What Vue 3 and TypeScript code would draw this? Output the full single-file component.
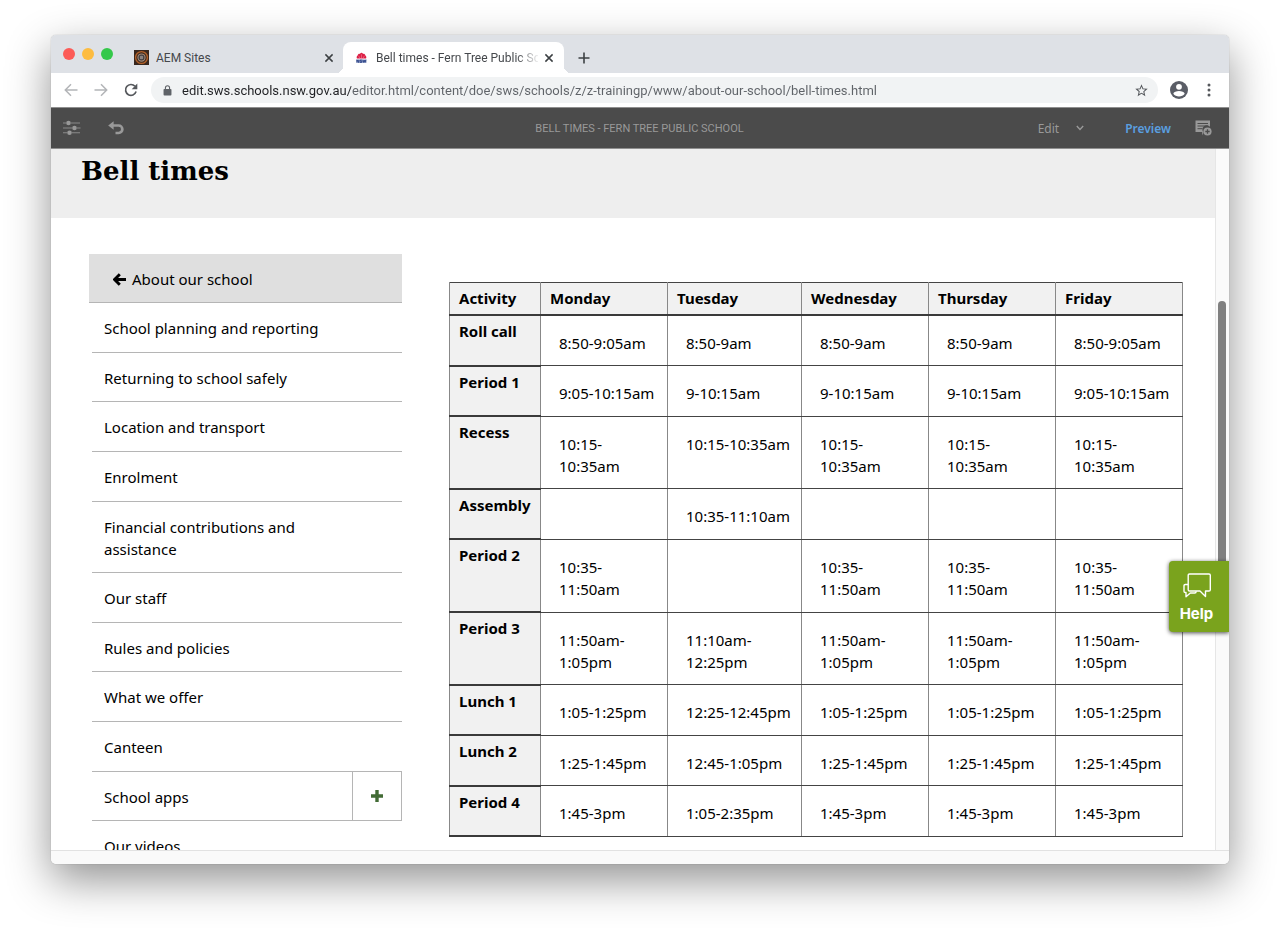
<script setup lang="ts">
import { ref } from 'vue'

interface NavItem {
  label: string
  expandable?: boolean
}

interface BellRow {
  activity: string
  times: string[]
}

const address = ref(
  'edit.sws.schools.nsw.gov.au/editor.html/content/doe/sws/schools/z/z-trainingp/www/about-our-school/bell-times.html',
)

const navItems: NavItem[] = [
  { label: 'School planning and reporting' },
  { label: 'Returning to school safely' },
  { label: 'Location and transport' },
  { label: 'Enrolment' },
  { label: 'Financial contributions and assistance' },
  { label: 'Our staff' },
  { label: 'Rules and policies' },
  { label: 'What we offer' },
  { label: 'Canteen' },
  { label: 'School apps', expandable: true },
  { label: 'Our videos' },
]

const days: string[] = ['Monday', 'Tuesday', 'Wednesday', 'Thursday', 'Friday']

const rows: BellRow[] = [
  { activity: 'Roll call', times: ['8:50-9:05am', '8:50-9am', '8:50-9am', '8:50-9am', '8:50-9:05am'] },
  { activity: 'Period 1', times: ['9:05-10:15am', '9-10:15am', '9-10:15am', '9-10:15am', '9:05-10:15am'] },
  { activity: 'Recess', times: ['10:15-10:35am', '10:15-10:35am', '10:15-10:35am', '10:15-10:35am', '10:15-10:35am'] },
  { activity: 'Assembly', times: ['', '10:35-11:10am', '', '', ''] },
  { activity: 'Period 2', times: ['10:35-11:50am', '', '10:35-11:50am', '10:35-11:50am', '10:35-11:50am'] },
  { activity: 'Period 3', times: ['11:50am-1:05pm', '11:10am-12:25pm', '11:50am-1:05pm', '11:50am-1:05pm', '11:50am-1:05pm'] },
  { activity: 'Lunch 1', times: ['1:05-1:25pm', '12:25-12:45pm', '1:05-1:25pm', '1:05-1:25pm', '1:05-1:25pm'] },
  { activity: 'Lunch 2', times: ['1:25-1:45pm', '12:45-1:05pm', '1:25-1:45pm', '1:25-1:45pm', '1:25-1:45pm'] },
  { activity: 'Period 4', times: ['1:45-3pm', '1:05-2:35pm', '1:45-3pm', '1:45-3pm', '1:45-3pm'] },
]
</script>

<template>
  <div class="desktop">
    <div class="window">
      <div class="tabs">
        <div class="lights">
          <button class="light red" aria-label="Close window"></button>
          <button class="light amber" aria-label="Minimise window"></button>
          <button class="light green" aria-label="Zoom window"></button>
        </div>
        <div class="tab">
          <svg class="fav" viewBox="0 0 16 16" width="15" height="15">
            <rect width="16" height="16" fill="#38271e" />
            <circle cx="8" cy="8" r="6.3" fill="none" stroke="#b4622a" stroke-width="1.5" />
            <circle cx="8" cy="8" r="3.8" fill="#3c3a3c" stroke="#a58a78" stroke-width="1.2" />
            <rect x="6.2" y="6.2" width="3.6" height="3.6" rx="1" fill="#8a8280" />
          </svg>
          <span class="tab-title">AEM Sites</span>
          <button class="tab-close" aria-label="Close AEM Sites">
            <svg viewBox="0 0 10 10" width="10" height="10"><path d="M1.4 1.4l7.2 7.2M8.6 1.4L1.4 8.6" stroke="#3c4043" stroke-width="1.5" fill="none" /></svg>
          </button>
        </div>
        <div class="tab active">
          <svg class="fav small" viewBox="0 0 12 12" width="11" height="12">
            <path d="M1 6.600C.4 5 .8 3.800 1.800 3.200 2 1.800 3.200 1.300 4.200 1.500 4.800.6 5.400.3 6 .3s1.200.3 1.800 1.200c1-.2 2.200.3 2.400 1.700 1 .6 1.400 1.800.8 3.400z" fill="#dc1f45" />
            <path d="M6 6.400V2M4.400 6.400L2.800 3.600M7.600 6.400l1.600-2.800" stroke="#f3a0b2" stroke-width=".5" />
            <path d="M.5 7.600h11v3.600H.5z" fill="#8d9bc4" />
            <path d="M1 11V8l2 3V8M6.300 8.200H4.600v1.200h1.700v1.400H4.400M7.500 8l.8 2.800.8-2.300.8 2.300.8-2.800" stroke="#2c4488" stroke-width="1" fill="none" />
          </svg>
          <span class="tab-title fade">Bell times - Fern Tree Public School</span>
          <button class="tab-close" aria-label="Close Bell times">
            <svg viewBox="0 0 10 10" width="10" height="10"><path d="M1.400 1.400l7.200 7.200M8.600 1.400L1.400 8.600" stroke="#3c4043" stroke-width="1.500" fill="none" /></svg>
          </button>
        </div>
        <button class="new-tab" aria-label="New tab">
          <svg viewBox="0 0 12 12" width="12" height="12"><path d="M6 .5v11M.5 6h11" stroke="#3c4043" stroke-width="1.600" /></svg>
        </button>
      </div>

      <div class="toolbar">
        <button class="tool" aria-label="Back">
          <svg viewBox="0 0 14 14" width="14" height="14"><path d="M13.500 7H1.500M7 1.300L1.300 7 7 12.700" stroke="#b3b5b8" stroke-width="1.500" fill="none" /></svg>
        </button>
        <button class="tool" aria-label="Forward">
          <svg viewBox="0 0 14 14" width="14" height="14"><path d="M.5 7h12M7 1.300L12.700 7 7 12.700" stroke="#b3b5b8" stroke-width="1.500" fill="none" /></svg>
        </button>
        <button class="tool" aria-label="Reload">
          <svg viewBox="0 0 14 14" width="14" height="14">
            <path d="M12.100 8.600A5.400 5.400 0 1 1 11 3.300" stroke="#55585c" stroke-width="1.700" fill="none" />
            <path d="M13.300.6v5.600H7.700z" fill="#55585c" />
          </svg>
        </button>
        <div class="omnibox">
          <svg viewBox="0 0 10 12" width="9" height="11">
            <rect x=".6" y="4.300" width="8.800" height="7.200" rx="1" fill="#5f6368" />
            <path d="M2.700 4.600V3a2.300 2.300 0 0 1 4.600 0v1.600" stroke="#5f6368" stroke-width="1.200" fill="none" />
          </svg>
          <input v-model="address" class="url" type="text" aria-label="Address" spellcheck="false" />
          <button class="star" aria-label="Bookmark this page">
            <svg viewBox="0 0 24 24" width="15" height="15"><path fill="#55585c" d="M22 9.240l-7.190-.62L12 2 9.190 8.630 2 9.240l5.460 4.730L5.820 21 12 17.270 18.180 21l-1.630-7.030L22 9.240zM12 15.400l-3.760 2.270 1-4.280-3.320-2.880 4.380-.38L12 6.100l1.710 4.040 4.380.38-3.320 2.880 1 4.280L12 15.400z" /></svg>
          </button>
        </div>
        <button class="tool avatar" aria-label="Profile">
          <svg viewBox="0 0 18 18" width="18" height="18">
            <circle cx="9" cy="9" r="9" fill="#5a5d66" />
            <circle cx="9" cy="5.800" r="2.900" fill="#fff" />
            <path d="M3.300 12.700C3.600 10.800 6.500 10 9 10s5.400.8 5.700 2.700C13.400 14.500 11.300 15.400 9 15.400s-4.400-.9-5.700-2.700z" fill="#fff" />
          </svg>
        </button>
        <button class="tool menu" aria-label="Menu">
          <svg viewBox="0 0 4 14" width="4" height="14">
            <circle cx="2" cy="2" r="1.500" fill="#55585c" /><circle cx="2" cy="7" r="1.500" fill="#55585c" /><circle cx="2" cy="12" r="1.500" fill="#55585c" />
          </svg>
        </button>
      </div>

      <div class="editor-bar">
        <div class="editor-left">
          <button class="tool" aria-label="Page information">
            <svg viewBox="0 0 18 16" width="18" height="16">
              <path d="M0 3h3M8 3h9M0 8h9M14 8h3.500M0 12.800h4M9 12.800h8" stroke="#8a8a8a" stroke-width="1.100" />
              <circle cx="5.500" cy="3" r="2.300" fill="#999" /><circle cx="11.500" cy="8" r="2.300" fill="#999" /><circle cx="6.500" cy="12.800" r="2.300" fill="#999" />
            </svg>
          </button>
          <button class="tool" aria-label="Undo">
            <svg viewBox="0 0 16 14" width="16" height="14">
              <path d="M4 4.500h6.600a3.700 3.700 0 0 1 0 7.500H7.500" stroke="#999" stroke-width="2.700" fill="none" />
              <path d="M5.600.2v8.600L.2 4.500z" fill="#999" />
            </svg>
          </button>
        </div>
        <div class="editor-title">BELL TIMES - FERN TREE PUBLIC SCHOOL</div>
        <div class="editor-right">
          <button class="mode">
            Edit
            <svg viewBox="0 0 8 6" width="8" height="6"><path d="M.8 1L4 4.400 7.200 1" stroke="#999" stroke-width="1.400" fill="none" /></svg>
          </button>
          <button class="preview">Preview</button>
          <button class="tool" aria-label="Annotate">
            <svg viewBox="0 0 17 16" width="17" height="16">
              <path d="M.5.5h14.500v6.200a4.300 4.300 0 0 0-6.500 5.700L7.200 15.500V12H.5z" fill="#999" />
              <path d="M2.500 3.500h10.500M2.500 6h10.500M2.500 8.700h5" stroke="#4b4b4b" stroke-width="1" />
              <circle cx="12.500" cy="11.500" r="4.100" fill="#999" />
              <path d="M12.500 9.300v4.400M10.300 11.500h4.400" stroke="#4b4b4b" stroke-width="1.300" />
            </svg>
          </button>
        </div>
      </div>

      <div class="viewport">
        <div class="page">
          <header class="page-header"><h1>Bell times</h1></header>
          <div class="columns">
            <nav class="side" aria-label="About our school">
              <a class="parent" href="#about">
                <svg viewBox="0 0 13 13" width="13" height="13"><path d="M6.800 1.200L1.600 6.500l5.200 5.300M2 6.500h11" stroke="#000" stroke-width="2.900" fill="none" /></svg>
                About our school
              </a>
              <div v-for="item in navItems" :key="item.label" class="item">
                <a href="#section">{{ item.label }}</a>
                <button v-if="item.expandable" class="expand" :aria-label="'Expand ' + item.label">
                  <svg viewBox="0 0 12 12" width="12" height="12"><path d="M6 0v12M0 6h12" stroke="#426b35" stroke-width="3.400" /></svg>
                </button>
              </div>
            </nav>
            <main>
              <table>
                <colgroup>
                  <col class="col-activity" />
                  <col v-for="day in days" :key="day" :class="{ 'col-wide': day === 'Tuesday' }" />
                </colgroup>
                <thead>
                  <tr>
                    <th scope="col">Activity</th>
                    <th v-for="day in days" :key="day" scope="col">{{ day }}</th>
                  </tr>
                </thead>
                <tbody>
                  <tr v-for="row in rows" :key="row.activity">
                    <th scope="row">{{ row.activity }}</th>
                    <td v-for="(time, i) in row.times" :key="i">{{ time }}</td>
                  </tr>
                </tbody>
              </table>
            </main>
          </div>
        </div>
        <div class="gutter"><div class="thumb"></div></div>
        <button class="help">
          <svg viewBox="0 0 28 25" width="28" height="25" fill="none" stroke="#fff" stroke-width="1.400" stroke-linejoin="round">
            <path d="M6.500 1h19.500q1.300 0 1.300 1.300v14.400q0 1.300-1.300 1.300h-3.500v5.500L17 18H6.500q-1.300 0-1.300-1.300V2.300Q5.200 1 6.500 1z" />
            <path d="M5.200 11.500H2.300Q1 11.500 1 12.800v5.400q0 1.300 1.300 1.300h.7v4.300l4.300-3.800h4.400q1.500 0 1.500-1.800" />
          </svg>
          Help
        </button>
      </div>
      <div class="bottom"></div>
    </div>
  </div>
</template>

<style>
body {
  background: #fff;
}
</style>

<style scoped>
* {
  box-sizing: border-box;
}
button {
  border: 0;
  padding: 0;
  background: none;
  font: inherit;
  color: inherit;
  display: flex;
  align-items: center;
  justify-content: center;
  flex: none;
}
svg {
  display: block;
  flex: none;
}
a {
  color: inherit;
  text-decoration: none;
}
.desktop {
  height: 100vh;
  padding: 35px 51px 68px;
  font-family: "Noto Sans", "Open Sans", sans-serif;
  overflow: hidden;
}
.window {
  height: 100%;
  display: flex;
  flex-direction: column;
  border-radius: 5px;
  overflow: hidden;
  background: #fff;
  box-shadow: 0 0 1px rgba(0, 0, 0, 0.4), 0 16px 44px rgba(0, 0, 0, 0.43);
}
.tabs {
  flex: none;
  height: 38px;
  display: flex;
  align-items: flex-end;
  background: #dee1e6;
  font-family: Roboto, sans-serif;
  font-size: 12px;
  color: #45484c;
}
.lights {
  display: flex;
  gap: 7px;
  padding: 0 14px 0 12px;
  height: 38px;
  align-items: center;
}
.light {
  width: 12px;
  height: 12px;
  border-radius: 50%;
}
.red { background: #fc5b57; }
.amber { background: #fdbc40; }
.green { background: #34c84a; }
.tab {
  position: relative;
  display: flex;
  align-items: center;
  width: 216px;
  height: 31px;
  padding: 0 8px 0 7px;
}
.tab.active {
  width: 221px;
  padding: 0 9px 0 13px;
  border-radius: 8px 8px 0 0;
  background: #fff;
}
.tab.active::before,
.tab.active::after {
  content: "";
  position: absolute;
  bottom: 0;
  width: 7px;
  height: 7px;
}
.tab.active::before {
  left: -7px;
  background: radial-gradient(circle at 0 0, transparent 7px, #fff 7px);
}
.tab.active::after {
  right: -7px;
  background: radial-gradient(circle at 100% 0, transparent 7px, #fff 7px);
}
.tab-title {
  flex: 1;
  min-width: 0;
  margin-left: 7px;
  white-space: nowrap;
  overflow: hidden;
}
.tab-title.fade {
  margin-left: 9px;
  margin-right: 5px;
  mask-image: linear-gradient(to right, #000 140px, transparent 164px);
}
.new-tab {
  width: 40px;
  height: 31px;
}
.tab-close {
  width: 12px;
  height: 20px;
}
.toolbar {
  flex: none;
  height: 34px;
  display: flex;
  align-items: center;
  padding: 0 16px 0 13px;
}
.toolbar > .tool {
  width: 14px;
  margin-right: 16px;
}
.omnibox {
  flex: 1;
  height: 26px;
  margin: 0 12px 0 -3px;
  padding: 0 9px 0 12px;
  border-radius: 13px;
  background: #f1f3f4;
  display: flex;
  align-items: center;
}
.url {
  flex: 1;
  min-width: 0;
  height: 26px;
  border: 0;
  padding: 0;
  margin-left: 10px;
  outline: 0;
  font-family: Roboto, sans-serif;
  font-size: 13px;
  color: transparent;
  background: linear-gradient(to right, #202124 169px, #5f6368 169px);
  -webkit-background-clip: text;
  background-clip: text;
}
.toolbar > .avatar {
  width: 18px;
  margin-right: 19px;
}
.toolbar > .menu {
  width: 4px;
  margin-right: 2px;
}
.editor-bar {
  flex: none;
  height: 42px;
  display: grid;
  grid-template-columns: 1fr auto 1fr;
  align-items: center;
  padding: 0 17px 0 12px;
  background: #4b4b4b;
  border-top: 1px solid #8f8f8f;
  border-bottom: 1px solid #8f8f8f;
  color: #999;
  font-size: 12px;
}
.editor-left {
  display: flex;
  align-items: center;
  gap: 27px;
}
.editor-title {
  padding-left: 4px;
  font-family: Roboto, sans-serif;
  font-size: 11px;
}
.editor-right {
  display: flex;
  align-items: center;
  justify-content: flex-end;
}
.mode {
  gap: 17px;
}
.preview {
  margin: 0 24px 0 41px;
  font-weight: 600;
  color: #5a9fe0;
}
.viewport {
  position: relative;
  flex: 1;
  min-height: 0;
  display: flex;
}
.page {
  flex: 1;
  min-width: 0;
  overflow: hidden;
  color: #000;
  font-size: 15px;
  line-height: 22px;
}
.page-header {
  height: 69px;
  padding: 6px 30px;
  background: #eee;
}
h1 {
  margin: 0;
  font-family: "DejaVu Serif", serif;
  font-size: 26px;
  line-height: 32px;
  font-weight: 700;
}
.columns {
  display: grid;
  grid-template-columns: minmax(0, 313fr) minmax(0, 734fr);
  gap: 47px;
  padding: 36px 32px 0 38px;
}
.side {
  display: flex;
  flex-direction: column;
}
.side > * {
  flex: 1 0 auto;
}
.parent {
  display: flex;
  align-items: center;
  gap: 6px;
  min-height: 49px;
  padding: 2px 0 0 24px;
  background: #dfdfdf;
  border-bottom: 1px solid #b5b5b5;
}
.item {
  display: flex;
  align-items: stretch;
  margin-left: 3px;
  border-bottom: 1px solid #b5b5b5;
}
.item > a {
  flex: 1;
  padding: 14px 60px 12px 12px;
}
.expand {
  width: 50px;
  border: solid #b5b5b5;
  border-width: 0 1px;
}
main {
  padding: 28px 0 34px;
}
table {
  width: 100%;
  height: 555px;
  table-layout: fixed;
  border-collapse: collapse;
  border: 1px solid #444;
}
.col-activity {
  width: 91px;
}
.col-wide {
  width: 134px;
}
th {
  padding: 4px 0 5px 9px;
  text-align: left;
  vertical-align: top;
  font-weight: 700;
  background: #f1f1f1;
  border: solid #888;
  border-width: 0 1px;
  border-bottom: 2px solid #3a3a3a;
}
td {
  padding: 16px 9px 11px 18px;
  vertical-align: top;
  border: solid #888;
  border-width: 0 1px;
  border-bottom: 1px solid #444;
}
.gutter {
  width: 14px;
  padding: 152px 2px 0;
  background: #fafafa;
  border-left: 1px solid #e6e6e6;
}
.thumb {
  height: 290px;
  width: 8px;
  border-radius: 4px;
  background: #808080;
}
.help {
  position: absolute;
  right: 0;
  top: 412px;
  width: 60px;
  height: 71px;
  flex-direction: column;
  gap: 5px;
  padding: 5px 5px 0 0;
  border-radius: 4px 0 0 4px;
  background: #7aa31d;
  box-shadow: 0 1px 4px rgba(0, 0, 0, 0.7);
  color: #fff;
  font-family: Inter, sans-serif;
  font-size: 15px;
  font-weight: 700;
  line-height: 22px;
}
.bottom {
  flex: none;
  height: 14px;
  background: #fafafa;
  border-top: 1px solid #e2e2e2;
}
</style>
